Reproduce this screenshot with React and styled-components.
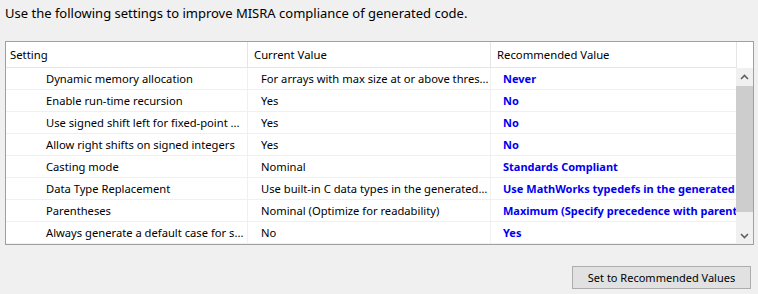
import React from 'react';
import styled, { createGlobalStyle } from 'styled-components';

const GlobalStyle = createGlobalStyle`
  html, body {
    margin: 0;
    padding: 0;
    background: #f0f0f0;
  }
  body {
    font-family: 'Noto Sans', 'Open Sans', sans-serif;
    font-size: 11.2px;
    color: #000;
  }
`;

const rows = [
  ['Dynamic memory allocation', 'For arrays with max size at or above thres...', 'Never'],
  ['Enable run-time recursion', 'Yes', 'No'],
  ['Use signed shift left for fixed-point ...', 'Yes', 'No'],
  ['Allow right shifts on signed integers', 'Yes', 'No'],
  ['Casting mode', 'Nominal', 'Standards Compliant'],
  ['Data Type Replacement', 'Use built-in C data types in the generated ...', 'Use MathWorks typedefs in the generated code'],
  ['Parentheses', 'Nominal (Optimize for readability)', 'Maximum (Specify precedence with parentheses)'],
  ['Always generate a default case for s...', 'No', 'Yes'],
];

const Page = styled.div`
  width: 758px;
  height: 294px;
  padding: 5px 4px 0 5px;
  box-sizing: border-box;
  display: flex;
  flex-direction: column;
`;

const Intro = styled.div`
  font-size: 13px;
  line-height: 16px;
  height: 16px;
  white-space: nowrap;
`;

const Frame = styled.div`
  margin-top: 20px;
  border: 1px solid #a0a0a0;
  background: #fff;
  display: flex;
  flex-direction: column;
`;

const Header = styled.div`
  display: grid;
  grid-template-columns: 242px 243px 246px 1fr;
  height: 26px;
`;

const HeadCell = styled.div`
  border-right: 1px solid #e5e5e5;
  border-bottom: 1px solid #e5e5e5;
  padding-left: ${({ $pad }) => $pad}px;
  display: flex;
  align-items: center;
  white-space: nowrap;
  overflow: hidden;
  font-size: 11.3px;
  &:last-child {
    border-right: none;
    border-bottom: none;
  }
`;

const Body = styled.div`
  display: flex;
  height: 176px;
`;

const Rows = styled.div`
  flex: 1;
  overflow: hidden;
`;

const Row = styled.div`
  display: grid;
  grid-template-columns: 242px 243px 246px;
  height: 22px;
`;

const Cell = styled.div`
  border-right: 1px solid #f0f0f0;
  border-bottom: 1px solid #f0f0f0;
  padding-left: ${({ $pad }) => $pad}px;
  line-height: 21px;
  white-space: nowrap;
  overflow: hidden;
  text-overflow: ${({ $clip }) => ($clip ? 'clip' : 'ellipsis')};
  &:last-child {
    border-right: none;
  }
`;

const Recommended = styled(Cell)`
  color: #0000f0;
  font-weight: 700;
  font-size: 11px;
`;

const Scrollbar = styled.div`
  width: 17px;
  background: #f0f0f0;
  display: flex;
  flex-direction: column;
  align-items: center;
`;

const Arrow = styled.div`
  height: 17px;
  width: 17px;
  display: flex;
  align-items: center;
  justify-content: center;
`;

const Track = styled.div`
  flex: 1;
  width: 17px;
  display: flex;
  flex-direction: column;
`;

const Thumb = styled.div`
  margin-top: 1px;
  height: 126px;
  background: #cdcdcd;
`;

const Footer = styled.div`
  display: flex;
  justify-content: flex-end;
  padding-top: 21px;
  padding-right: 3px;
`;

const Button = styled.button`
  width: 179px;
  height: 23px;
  background: #e1e1e1;
  border: 1px solid #adadad;
  font-family: inherit;
  font-size: 11px;
  color: #000;
  padding: 0;
`;

const Chevron = ({ up }) => (
  <svg width="9" height="6" viewBox="0 0 9 6">
    <path
      d={up ? 'M1 5 L4.5 1.5 L8 5' : 'M1 1 L4.5 4.5 L8 1'}
      fill="none"
      stroke="#606060"
      strokeWidth="1.6"
    />
  </svg>
);

export default function App() {
  return (
    <>
      <GlobalStyle />
      <Page>
        <Intro>Use the following settings to improve MISRA compliance of generated code.</Intro>
        <Frame>
          <Header>
            <HeadCell $pad={4}>Setting</HeadCell>
            <HeadCell $pad={6}>Current Value</HeadCell>
            <HeadCell $pad={6}>Recommended Value</HeadCell>
            <HeadCell />
          </Header>
          <Body>
            <Rows>
              {rows.map(([s, c, r]) => (
                <Row key={s}>
                  <Cell $pad={40}>{s}</Cell>
                  <Cell $pad={13}>{c}</Cell>
                  <Recommended $pad={12} $clip>{r}</Recommended>
                </Row>
              ))}
            </Rows>
            <Scrollbar>
              <Arrow><Chevron up /></Arrow>
              <Track><Thumb /></Track>
              <Arrow><Chevron /></Arrow>
            </Scrollbar>
          </Body>
        </Frame>
        <Footer>
          <Button>Set to Recommended Values</Button>
        </Footer>
      </Page>
    </>
  );
}
